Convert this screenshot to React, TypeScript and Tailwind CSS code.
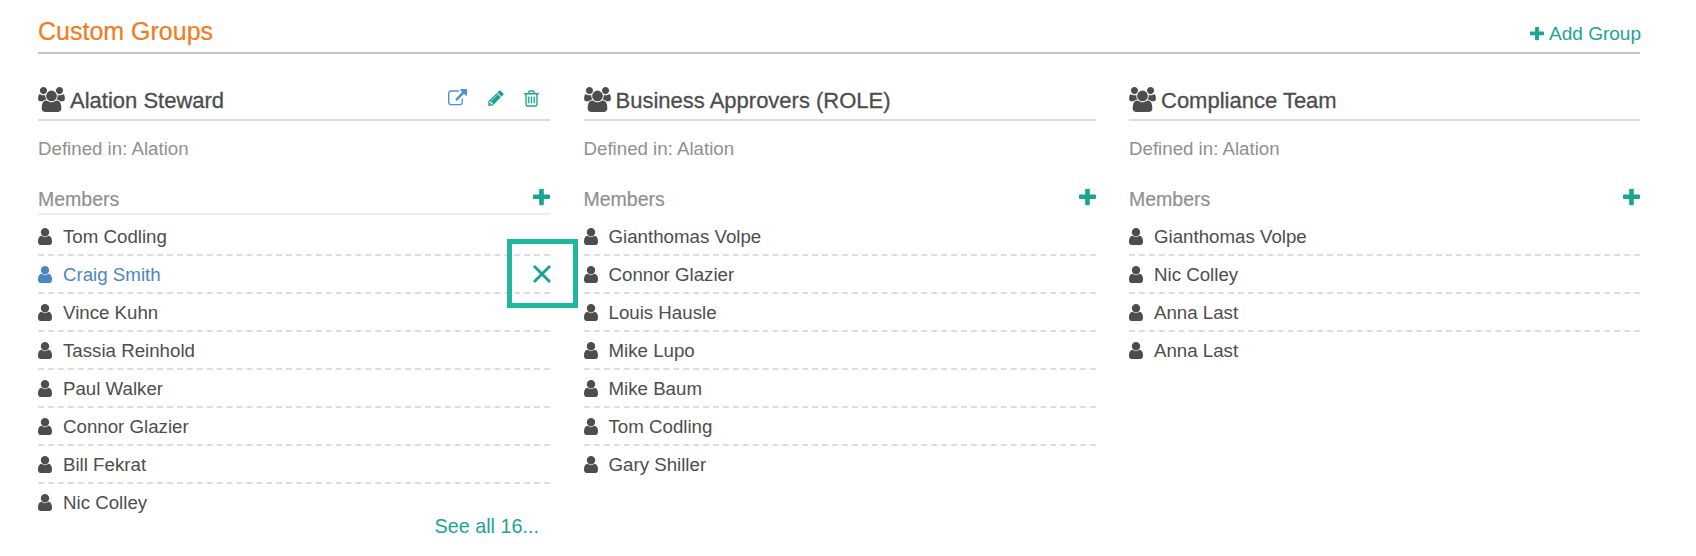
const P = {
  user: "M1536 1399q0 109-62.5 187t-150.5 78h-854q-88 0-150.5-78t-62.5-187q0-85 8.5-160.5t31.5-152 58.5-131 94-89 134.5-34.5q131 128 313 128t313-128q76 0 134.5 34.5t94 89 58.5 131 31.5 152 8.5 160.5zm-256-887q0 159-112.5 271.5t-271.5 112.5-271.5-112.5-112.5-271.5 112.5-271.5 271.5-112.5 271.5 112.5 112.5 271.5z",
  users: "M593 896q-162 5-265 128h-134q-82 0-138-40.5t-56-118.5q0-353 124-353 6 0 43.5 21t97.5 42.5 119 21.5q67 0 133-23-5 37-5 66 0 139 81 256zm1071 637q0 120-73 189.5t-194 69.5h-874q-121 0-194-69.5t-73-189.5q0-53 3.5-103.5t14-109 26.5-108.5 43-97.5 62-81 85.5-53.5 111.5-20q10 0 43 21.5t73 48 107 48 135 21.5 135-21.5 107-48 73-48 43-21.5q61 0 111.5 20t85.5 53.5 62 81 43 97.5 26.5 108.5 14 109 3.5 103.5zm-1024-1277q0 106-75 181t-181 75-181-75-75-181 75-181 181-75 181 75 75 181zm704 384q0 159-112.5 271.5t-271.5 112.5-271.5-112.5-112.5-271.5 112.5-271.5 271.5-112.5 271.5 112.5 112.5 271.5zm576 225q0 78-56 118.5t-138 40.5h-134q-103-123-265-128 81-117 81-256 0-29-5-66 66 23 133 23 59 0 119-21.5t97.5-42.5 43.5-21q124 0 124 353zm-128-609q0 106-75 181t-181 75-181-75-75-181 75-181 181-75 181 75 75 181z",
  plus: "M1600 736v192q0 40-28 68t-68 28h-416v416q0 40-28 68t-68 28h-192q-40 0-68-28t-28-68v-416h-416q-40 0-68-28t-28-68v-192q0-40 28-68t68-28h416v-416q0-40 28-68t68-28h192q40 0 68 28t28 68v416h416q40 0 68 28t28 68z",
  pencil: "M491 1536l91-91-235-235-91 91v107h128v128h107zm523-928q0-22-22-22-10 0-17 7l-542 542q-7 7-7 17 0 22 22 22 10 0 17-7l542-542q7-7 7-17zm-54-192l416 416-832 832h-416v-416zm683 96q0 53-37 90l-166 166-416-416 166-165q36-38 90-38 53 0 91 38l235 234q37 39 37 91z",
  ext: "M1408 928v320q0 119-84.5 203.5t-203.5 84.5h-832q-119 0-203.5-84.5t-84.5-203.5v-832q0-119 84.5-203.5t203.5-84.5h704q14 0 23 9t9 23v64q0 14-9 23t-23 9h-704q-66 0-113 47t-47 113v832q0 66 47 113t113 47h832q66 0 113-47t47-113v-320q0-14 9-23t23-9h64q14 0 23 9t9 23zm384-864v512q0 26-19 45t-45 19-45-19l-176-176-652 652q-10 10-23 10t-23-10l-114-114q-10-10-10-23t10-23l652-652-176-176q-19-19-19-45t19-45 45-19h512q26 0 45 19t19 45z",
  trash: "M704 736v576q0 14-9 23t-23 9h-64q-14 0-23-9t-9-23v-576q0-14 9-23t23-9h64q14 0 23 9t9 23zm256 0v576q0 14-9 23t-23 9h-64q-14 0-23-9t-9-23v-576q0-14 9-23t23-9h64q14 0 23 9t9 23zm256 0v576q0 14-9 23t-23 9h-64q-14 0-23-9t-9-23v-576q0-14 9-23t23-9h64q14 0 23 9t9 23zm128 724v-948h-896v948q0 22 7 40.5t14.5 27 10.5 8.5h832q3 0 10.5-8.5t14.5-27 7-40.5zm-672-1076h448l-48-117q-7-9-17-11h-317q-10 2-17 11zm928 32v64q0 14-9 23t-23 9h-96v948q0 83-47 143.5t-113 60.5h-832q-66 0-113-58.5t-47-141.5v-952h-96q-14 0-23-9t-9-23v-64q0-14 9-23t23-9h309l70-167q15-37 54-63t79-26h320q40 0 79 26t54 63l70 167h309q14 0 23 9t9 23z",
};

function Icon({ d, className, vb = "0 0 1792 1792" }: { d: string; className: string; vb?: string }) {
  return (
    <svg viewBox={vb} className={className} fill="currentColor" aria-hidden="true">
      <path d={d} />
    </svg>
  );
}

type Group = { name: string; members: string[]; actions?: boolean; seeAll?: boolean };

const groups: Group[] = [
  {
    name: "Alation Steward",
    actions: true,
    seeAll: true,
    members: ["Tom Codling", "Craig Smith", "Vince Kuhn", "Tassia Reinhold", "Paul Walker", "Connor Glazier", "Bill Fekrat", "Nic Colley"],
  },
  {
    name: "Business Approvers (ROLE)",
    members: ["Gianthomas Volpe", "Connor Glazier", "Louis Hausle", "Mike Lupo", "Mike Baum", "Tom Codling", "Gary Shiller"],
  },
  {
    name: "Compliance Team",
    members: ["Gianthomas Volpe", "Nic Colley", "Anna Last", "Anna Last"],
  },
];

function MemberRow({ name, last, hover }: { name: string; last: boolean; hover: boolean }) {
  return (
    <div
      className={`relative flex h-[38px] items-center border-b-2 border-dashed pt-[2px] ${last ? "border-transparent" : "border-[#dddddd]"} ${hover ? "text-[#4a86c5]" : "text-[#4d4d4d]"}`}
    >
      <Icon d={P.user} vb="256 128 1280 1536" className="mt-[-2px] h-[17px] w-[14px] shrink-0" />
      <span className="ml-[11px]">{name}</span>
      {hover && (
        <div className="absolute left-[469px] top-[-17px] flex h-[69px] w-[71px] items-center justify-center border-[5px] border-[#1fb89c] bg-transparent text-[#1aa593]">
          <svg viewBox="0 0 20 20" className="mr-[2px] h-[20px] w-[20px]" fill="none" stroke="currentColor" strokeWidth="3">
            <path d="M2 2 L18 18 M18 2 L2 18" />
          </svg>
        </div>
      )}
    </div>
  );
}

function GroupCard({ g }: { g: Group }) {
  return (
    <div>
      <div className="flex h-[42px] items-center justify-between border-b-2 border-[#dddddd] pt-[3px]">
        <div className="flex items-center">
          <Icon d={P.users} vb="0 0 1920 1792" className="mt-[-3px] h-[25px] w-[27px] text-[#4d4d4d]" />
          <span className="ml-[5px] text-[22px] font-medium text-[#4d4d4d] [-webkit-text-stroke:0.3px_#4d4d4d]">{g.name}</span>
        </div>
        {g.actions && (
          <div className="mb-[5px] flex items-center">
            <Icon d={P.ext} className="h-[19px] w-[19px] text-[#4a90d9]" />
            <Icon d={P.pencil} className="ml-[20px] h-[18px] w-[18px] text-[#1aa593]" />
            <Icon d={P.trash} className="ml-[17px] mr-[9px] h-[19px] w-[19px] text-[#1aa593]" />
          </div>
        )}
      </div>
      <div className="mt-[17px] h-[22px] leading-[22px] text-[#909090]">Defined in: Alation</div>
      <div className={`mt-[22px] flex h-[33px] items-center justify-between border-b-2 ${g.actions ? "border-[#eeeeee]" : "border-transparent"}`}>
        <span className="mt-[4px] text-[19.5px] text-[#909090] [-webkit-text-stroke:0.2px_#909090]">Members</span>
        <Icon d={P.plus} vb="192 192 1408 1408" className="mb-[1px] h-[17px] w-[17px] text-[#1aa593]" />
      </div>
      <div className="mt-[3px]">
        {g.members.map((m, i) => (
          <MemberRow key={i} name={m} last={i === g.members.length - 1} hover={g.actions === true && i === 1} />
        ))}
      </div>
      {g.seeAll && <div className="mr-[11px] mt-[-10px] text-right text-[19.8px] text-[#1aa593]">See all 16...</div>}
    </div>
  );
}

export default function App() {
  return (
    <div className="h-[556px] w-[1696px] overflow-hidden bg-white pl-[38px] pr-[56px] pt-[10px] font-['Liberation_Sans',sans-serif] text-[18.7px]">
      <div className="flex h-[44px] items-center justify-between border-b-2 border-[#c4c4c4]">
        <span className="mt-[2px] text-[25px] text-[#f47a20] [-webkit-text-stroke:0.2px_#f47a20]">Custom Groups</span>
        <span className="mr-[-1px] mt-[6px] flex items-center text-[19px] text-[#1aa593]">
          <Icon d={P.plus} vb="192 192 1408 1408" className="mr-[5px] h-[14px] w-[14px]" />
          Add Group
        </span>
      </div>
      <div className="mt-[25px] grid grid-cols-[512px_512px_511px] gap-x-[33.5px]">
        {groups.map((g) => (
          <GroupCard key={g.name} g={g} />
        ))}
      </div>
    </div>
  );
}
